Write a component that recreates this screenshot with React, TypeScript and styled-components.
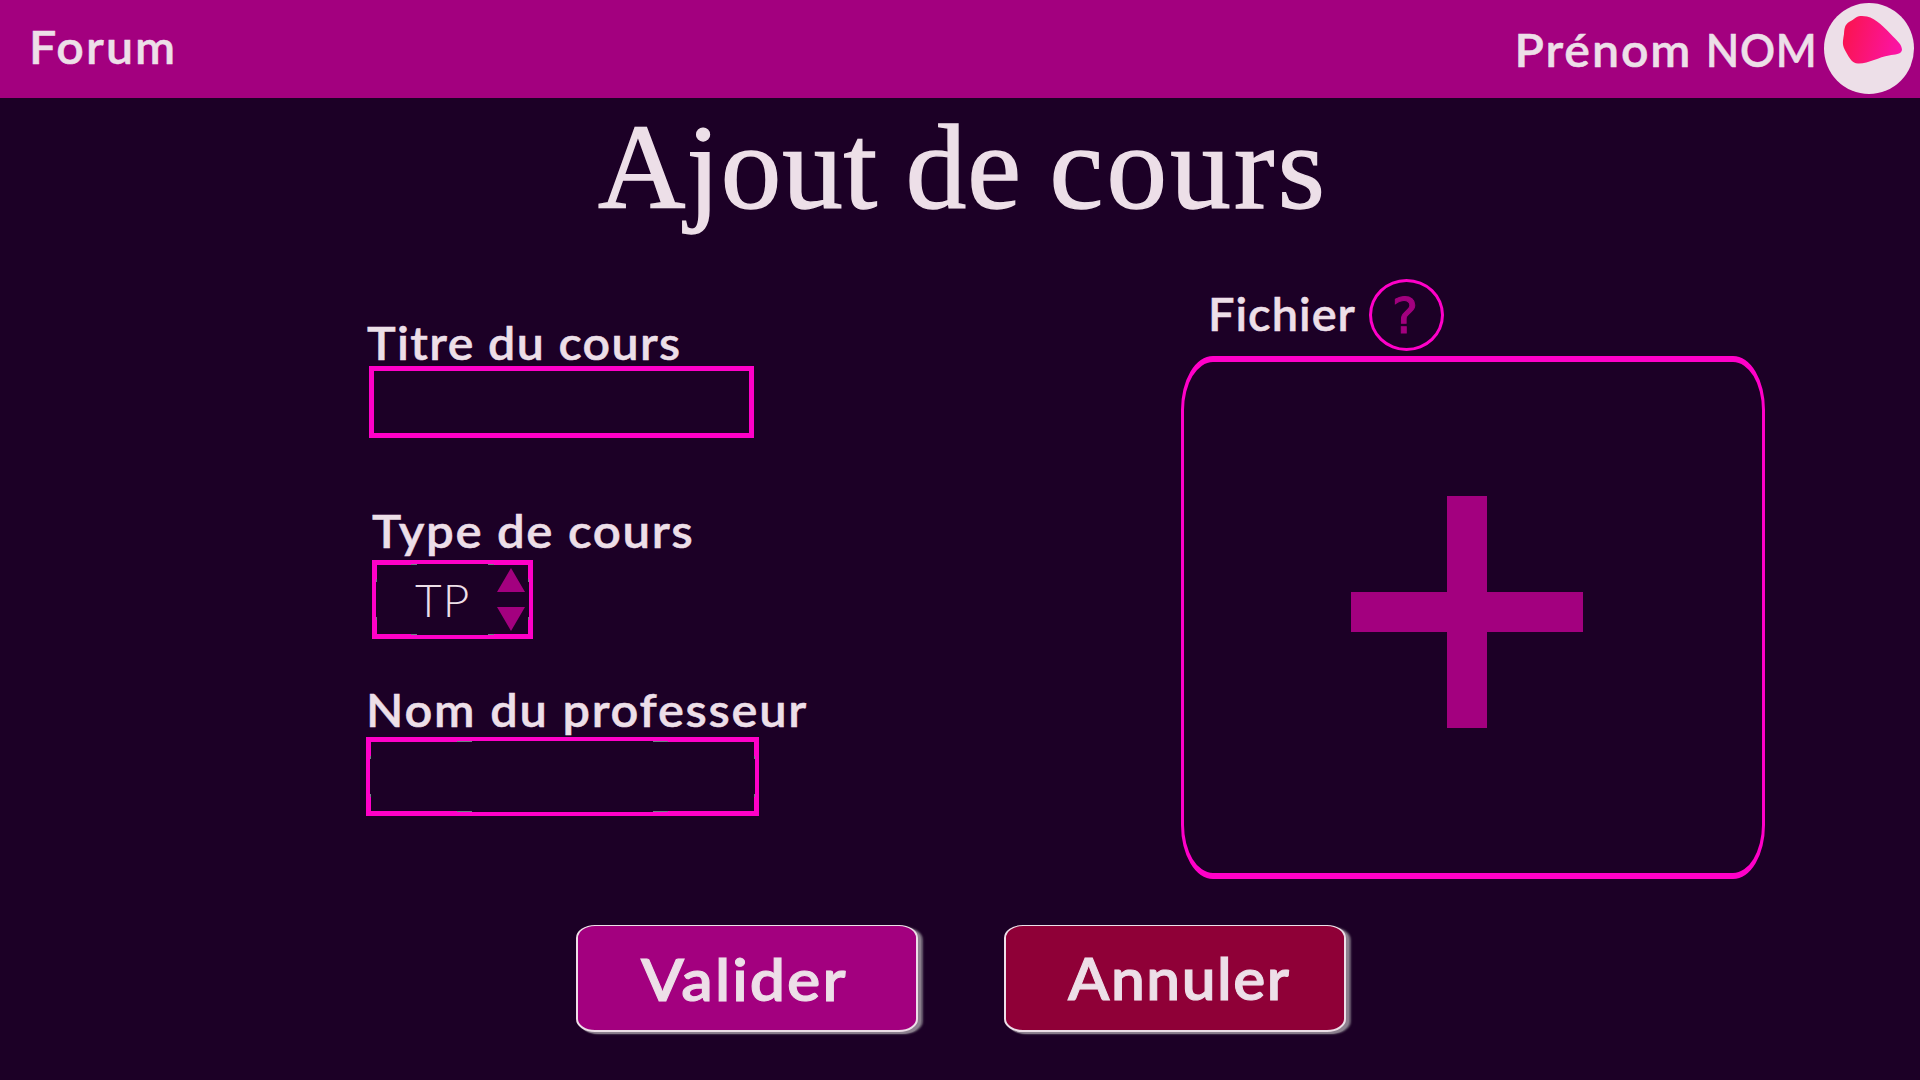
import React from "react";
import styled, { createGlobalStyle, css } from "styled-components";

const c = {
  bg: "#1c0026",
  purple: "#a3007f",
  pink: "#ff00c8",
  text: "#eddfe8",
  red: "#8f0037",
};

const GlobalStyle = createGlobalStyle`
  * { box-sizing: border-box; }
  body { margin: 0; background: ${c.bg}; }
`;

const Page = styled.div`
  width: 1920px;
  height: 1080px;
  overflow: hidden;
  display: flex;
  flex-direction: column;
  background: ${c.bg};
  color: ${c.text};
  font-family: Lato, "Liberation Sans", sans-serif;
`;

const Label = styled.span<{ $spacing?: number; $stretch?: number }>`
  display: block;
  height: 48px;
  font-size: 46px;
  line-height: 50px;
  font-weight: 600;
  white-space: nowrap;
  letter-spacing: ${(p) => p.$spacing ?? 1}px;
  transform: scaleX(${(p) => p.$stretch ?? 1});
  transform-origin: left;
  -webkit-text-stroke: 0.5px ${c.text};
`;

const Header = styled.header`
  display: flex;
  justify-content: space-between;
  flex: none;
  height: 98px;
  padding: 3px 6px 0 29px;
  background: ${c.purple};
`;

const ForumLink = styled(Label)`
  margin-top: 19px;
`;

const User = styled.div`
  display: flex;
`;

const FirstName = styled(Label)`
  margin: 22px 7px 0 0;
  transform-origin: right;
`;

const LastName = styled(Label)`
  margin: 22px 7px 0 0;
  transform-origin: right;
`;

const Avatar = styled.svg`
  display: block;
  width: 90px;
  height: 91px;
`;

const Title = styled.h1`
  flex: none;
  margin: 0;
  padding-left: 598px;
  height: 181px;
  font: 400 121px/138px "Liberation Serif", serif;
  letter-spacing: 0.9px;
  word-spacing: -3.5px;
  white-space: nowrap;
  -webkit-text-stroke: 1.4px ${c.text};
`;

const WideWord = styled.span`
  letter-spacing: 3.3px;
`;

const Main = styled.main`
  display: flex;
  flex: none;
  height: 646px;
  padding-left: 366px;
`;

const Form = styled.form`
  display: flex;
  flex-direction: column;
  width: 815px;
  padding-top: 39px;
`;

const Field = styled.label<{ $gap: number; $indent: number; $height: number }>`
  display: flex;
  flex-direction: column;
  align-items: flex-start;
  gap: ${(p) => p.$gap}px;
  height: ${(p) => p.$height}px;
  padding-left: ${(p) => p.$indent}px;
`;

const TitleLabel = styled(Label)`
  margin-left: -2px;
`;

const edge = (dir: string, a: number, b: number) =>
  `linear-gradient(${dir}, ${c.pink} ${a}%, #6f7f86 ${a}%, #6f7f86 ${b}%, transparent ${b}%, transparent ${100 - b}%, #6f7f86 ${100 - b}%, #6f7f86 ${100 - a}%, ${c.pink} ${100 - a}%)`;

const notched = css`
  border: 4px solid ${c.pink};
  background:
    ${edge("to right", 22.7, 26.5)} top / 100% 1px no-repeat,
    ${edge("to right", 22.7, 26.5)} bottom / 100% 1px no-repeat,
    ${edge("to bottom", 21, 25)} left / 1px 100% no-repeat,
    ${edge("to bottom", 21, 25)} right / 1px 100% no-repeat;
`;

const TitleInput = styled.input`
  width: 385px;
  height: 72px;
  border: 5px solid ${c.pink};
  background: transparent;
  outline: none;
  color: inherit;
  font: 300 40px Lato, sans-serif;
`;

const TeacherInput = styled(TitleInput)`
  width: 393px;
  height: 79px;
  ${notched}
`;

const Select = styled.div`
  display: flex;
  justify-content: space-between;
  width: 161px;
  height: 79px;
  padding: 4px 4px 4px 39px;
  ${notched}
`;

const SelectValue = styled.span`
  font-size: 46px;
  line-height: 64px;
  font-weight: 300;
  letter-spacing: 1px;
`;

const Arrows = styled.svg`
  display: block;
  width: 28px;
  height: 63px;
  fill: ${c.purple};
`;

const FileColumn = styled.section`
  display: flex;
  flex-direction: column;
  width: 584px;
`;

const FileHeading = styled.div`
  display: flex;
  height: 77px;
  padding-left: 27px;
`;

const FileLabel = styled(Label)`
  width: 161px;
  margin-top: 10px;
`;

const Help = styled.button`
  width: 75px;
  height: 72px;
  padding: 1px 3px 0 0;
  border: 3px solid ${c.pink};
  border-radius: 50%;
  background: transparent;
  color: ${c.purple};
  font: 400 50px/58px "DejaVu Sans", sans-serif;
  text-align: center;
  -webkit-text-stroke: 1px ${c.purple};
`;

const DropZone = styled.button`
  display: flex;
  flex: none;
  align-items: flex-start;
  width: 584px;
  height: 523px;
  padding: 134px 0 0 167px;
  border: solid ${c.pink};
  border-width: 6px 3px;
  border-radius: 32px / 54px;
  background: transparent;
`;

const Plus = styled.svg`
  display: block;
  width: 232px;
  height: 232px;
  fill: ${c.purple};
`;

const Actions = styled.footer`
  display: flex;
  gap: 86px;
  padding-left: 576px;
`;

const Button = styled.button<{ $bg: string }>`
  display: flex;
  width: 342px;
  height: 107px;
  padding: 0;
  border: solid ${c.text};
  border-width: 1px 2px 2px;
  border-radius: 19px / 13px;
  background: ${(p) => p.$bg};
  box-shadow:
    3px 2px 1px #8d818f,
    5px 2px 2px #6d6072;
  color: ${c.text};
`;

const ButtonText = styled.span<{ $spacing: number; $stretch: number; $left: number; $line: number }>`
  margin-left: ${(p) => p.$left}px;
  font: 600 58px/${(p) => p.$line}px Lato, sans-serif;
  letter-spacing: ${(p) => p.$spacing}px;
  transform: scaleX(${(p) => p.$stretch});
  transform-origin: left;
  -webkit-text-stroke: 1px ${c.text};
`;

export default function App() {
  return (
    <Page>
      <GlobalStyle />
      <Header>
        <ForumLink $spacing={2} $stretch={1.05}>Forum</ForumLink>
        <User>
          <FirstName $spacing={1.8} $stretch={1.05}>Prénom</FirstName>
          <LastName $spacing={0.6} $stretch={0.95}>NOM</LastName>
          <Avatar viewBox="0 0 90 91">
            <defs>
              <linearGradient id="blob" x1="0" y1="0.4" x2="1" y2="0.6">
                <stop offset="0" stopColor="#fa1450" />
                <stop offset="1" stopColor="#fb14a8" />
              </linearGradient>
            </defs>
            <ellipse cx="45" cy="45.5" rx="45" ry="45.5" fill={c.text} />
            <path
              d="M32 14.500C35 12.500 39 12.700 43 13.500C52 15.500 61 25 69 33.500C74 38.500 78 42 78 47C77 52 71 51 65 52.500C55 54 44 61 34 60.500C28 60 26 56 22 49C18 42 18.500 40 20 31C20.500 24 21 22 25 19C27.500 17.500 29.500 16.500 32 14.500Z"
              fill="url(#blob)"
            />
          </Avatar>
        </User>
      </Header>
      <Title>
        Ajout de <WideWord>cours</WideWord>
      </Title>
      <Main>
        <Form>
          <Field $gap={0} $indent={3} $height={188}>
            <TitleLabel $spacing={1.3} $stretch={1.05}>Titre du cours</TitleLabel>
            <TitleInput />
          </Field>
          <Field $gap={6} $indent={6} $height={179}>
            <Label $spacing={1.5} $stretch={1.07}>Type de cours</Label>
            <Select>
              <SelectValue>TP</SelectValue>
              <Arrows viewBox="0 0 28 63">
                <path d="M14 0L28 24H0ZM0 39H28L14 63Z" />
              </Arrows>
            </Select>
          </Field>
          <Field $gap={4} $indent={0} $height={140}>
            <Label $spacing={1.65} $stretch={1.06}>Nom du professeur</Label>
            <TeacherInput />
          </Field>
        </Form>
        <FileColumn>
          <FileHeading>
            <FileLabel $spacing={1} $stretch={1.02}>Fichier</FileLabel>
            <Help>?</Help>
          </FileHeading>
          <DropZone>
            <Plus viewBox="0 0 232 232">
              <path d="M96 0H136V96H232V136H136V232H96V136H0V96H96Z" />
            </Plus>
          </DropZone>
        </FileColumn>
      </Main>
      <Actions>
        <Button $bg={c.purple}>
          <ButtonText $spacing={1.9} $stretch={1.08} $left={63} $line={106}>Valider</ButtonText>
        </Button>
        <Button $bg={c.red}>
          <ButtonText $spacing={1.5} $stretch={1.04} $left={62} $line={104}>Annuler</ButtonText>
        </Button>
      </Actions>
    </Page>
  );
}
